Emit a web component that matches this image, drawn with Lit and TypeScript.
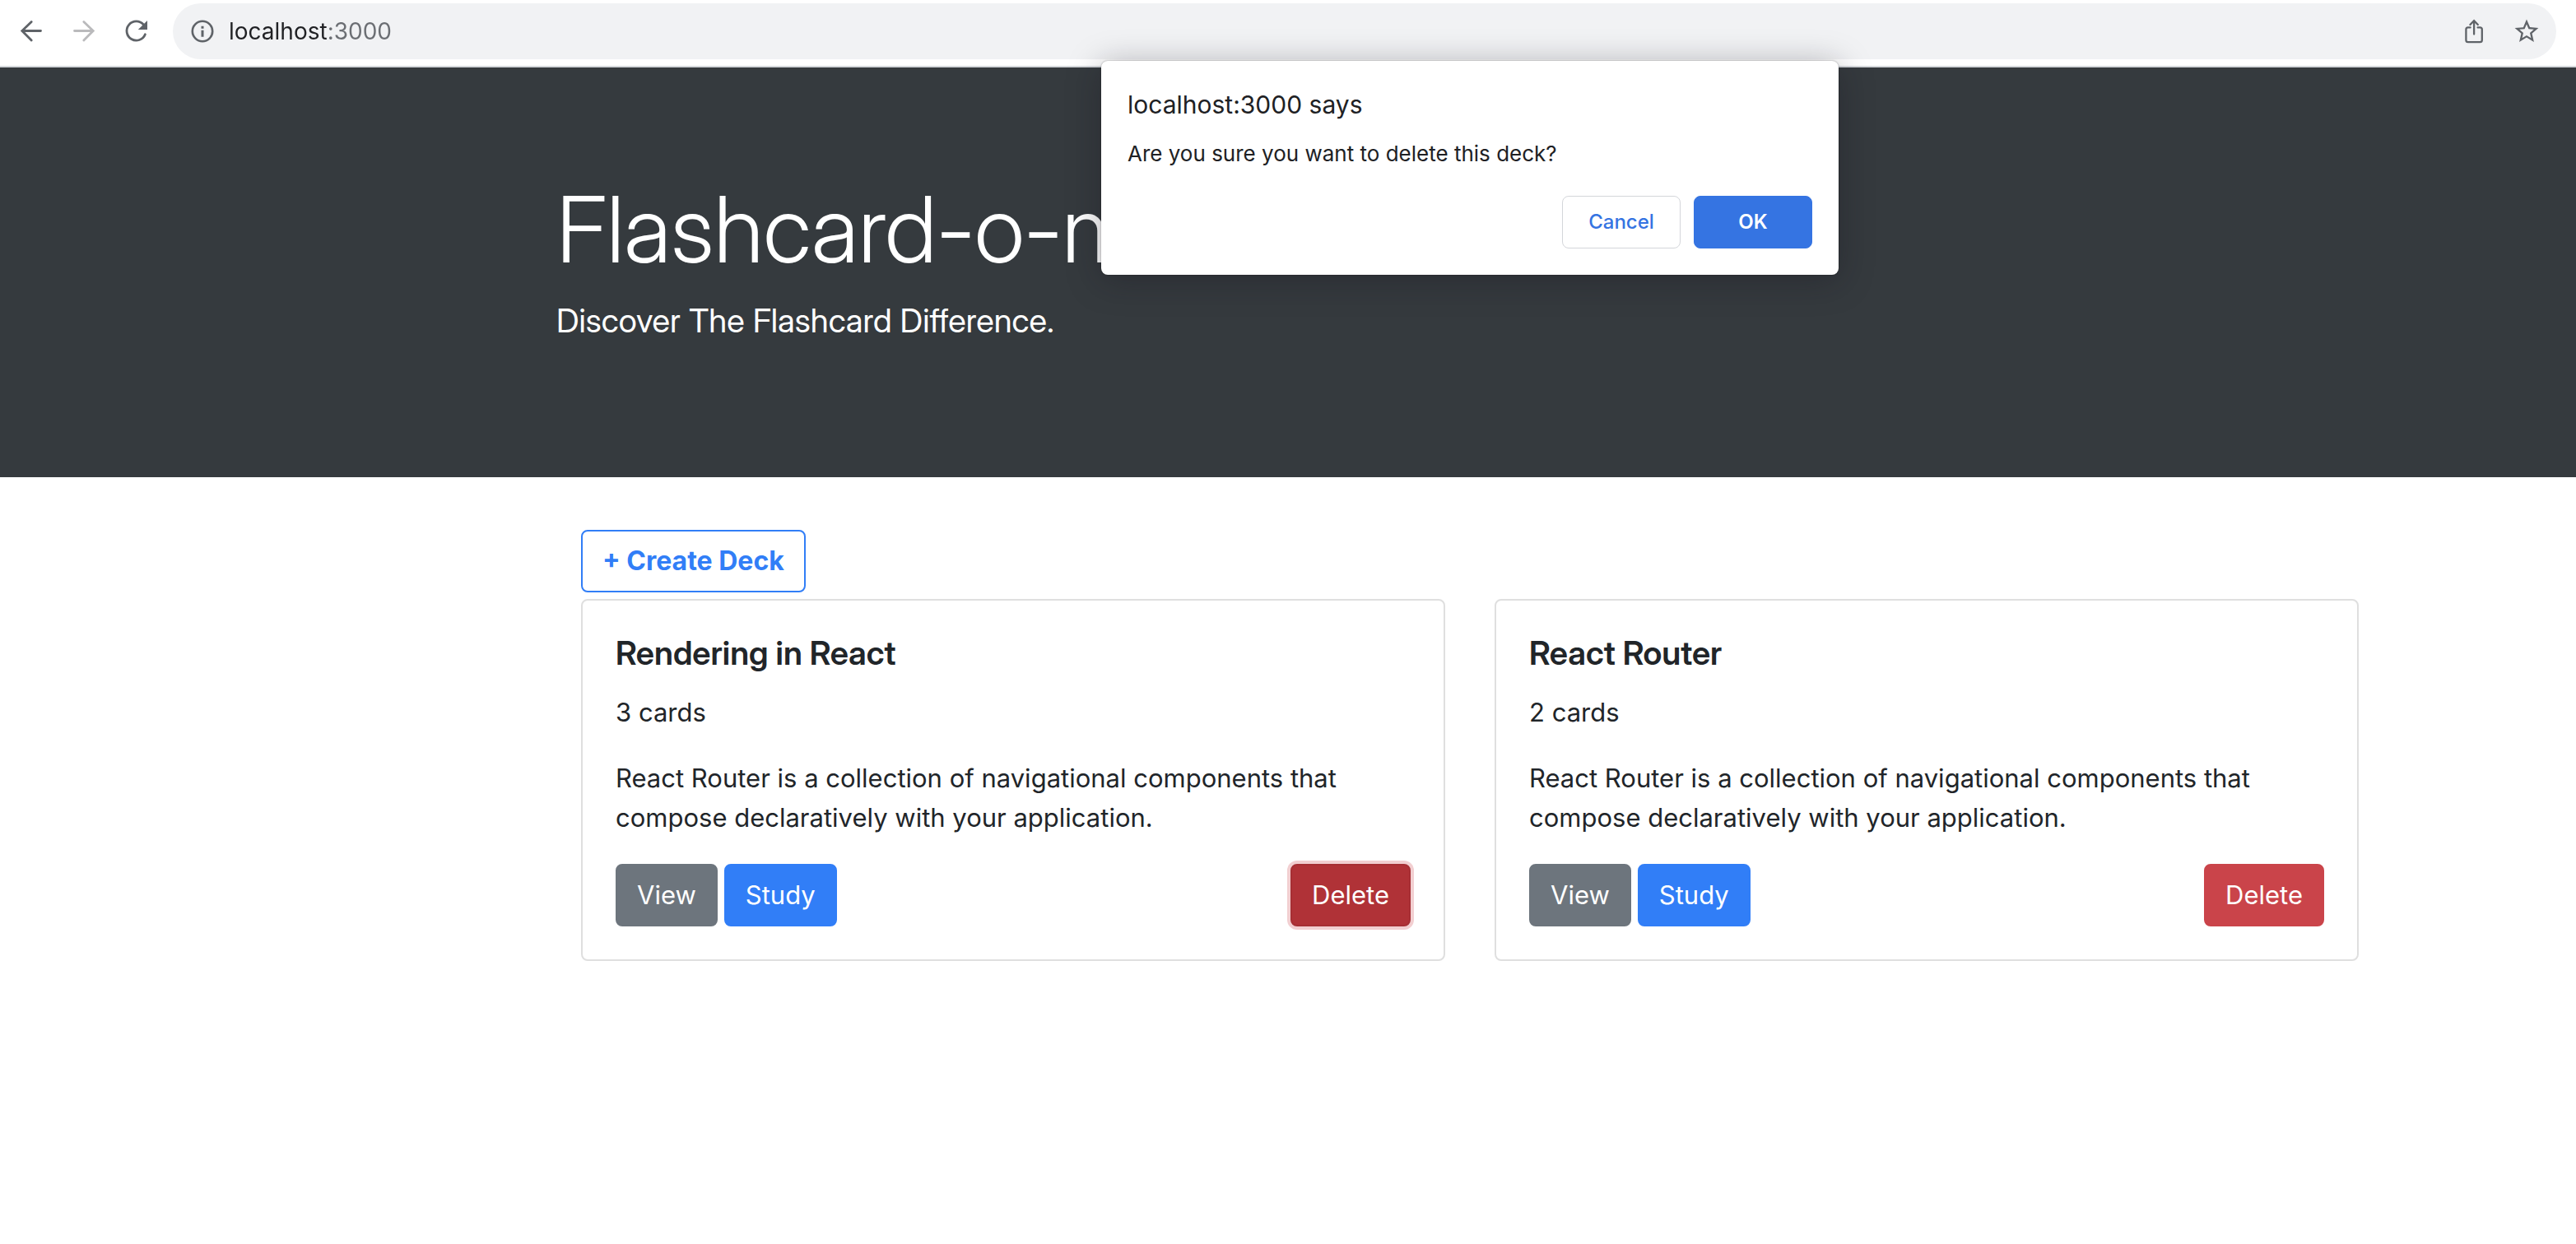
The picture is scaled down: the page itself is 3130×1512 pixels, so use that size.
import { LitElement, html, css, svg } from "lit";
import { customElement, property, state } from "lit/decorators.js";
import { classMap } from "lit/directives/class-map.js";

interface Deck {
  id: number;
  name: string;
  cards: number;
  description: string;
}

const DECKS: Deck[] = [
  {
    id: 1,
    name: "Rendering in React",
    cards: 3,
    description:
      "React Router is a collection of navigational components that compose declaratively with your application.",
  },
  {
    id: 2,
    name: "React Router",
    cards: 2,
    description:
      "React Router is a collection of navigational components that compose declaratively with your application.",
  },
];

const icon = (content: unknown) => html`
  <svg class="icon" viewBox="0 0 32 32" width="32" height="32" fill="none" stroke="currentColor" stroke-width="2.8" aria-hidden="true">
    ${content}
  </svg>
`;

const backIcon = icon(svg`<path d="M27.500 15.500H5M16.200 4.400L4.800 15.500l11.400 11.500" stroke-linecap="round"/>`);
const forwardIcon = icon(svg`<path d="M4.500 15.500H27M15.800 4.400L27.200 15.500 15.800 27" stroke-linecap="round"/>`);
const reloadIcon = icon(svg`
  <path d="M24.400 8A11.600 11.600 0 1 0 26.400 19.800" stroke-linecap="round"/>
  <path d="M29 3v11H17.800z" fill="currentColor" stroke="none"/>`);
const infoIcon = icon(svg`
  <circle cx="16" cy="16" r="12.200" stroke-width="2.600"/>
  <path d="M14.500 9.700h3v3h-3zM14.500 14.700h3v8h-3z" fill="currentColor" stroke="none"/>`);
const shareIcon = icon(svg`
  <path d="M11.600 11.400H8.800a2.400 2.400 0 0 0-2.400 2.400v13a2.400 2.400 0 0 0 2.400 2.400h14.600a2.400 2.400 0 0 0 2.400-2.400v-13a2.400 2.400 0 0 0-2.400-2.400h-2.800M16.100 19.600V4M11.400 8L16.100 3.200 20.800 8" stroke-width="2.300" stroke-linecap="round"/>`);
const starIcon = icon(svg`
  <path transform="translate(-1.300 -1.300) scale(1.440)" fill="currentColor" stroke="none"
    d="M22 9.240l-7.190-.62L12 2 9.190 8.630 2 9.240l5.460 4.730L5.820 21 12 17.270 18.180 21l-1.630-7.030L22 9.240zM12 15.400l-3.760 2.270 1-4.280-3.320-2.880 4.380-.38L12 6.100l1.710 4.040 4.380.38-3.320 2.880 1 4.280L12 15.400z"/>`);

@customElement("browser-bar")
export class BrowserBar extends LitElement {
  static styles = css`
    :host {
      display: block;
      color: #5f6368;
      border-bottom: 2px solid #d5d8dc;
    }
    .bar {
      display: flex;
      align-items: center;
      gap: 32px;
      padding: 4px 24px 8px 22px;
    }
    .icon {
      display: block;
    }
    .tool {
      padding: 0;
      border: 0;
      background: none;
      color: inherit;
      cursor: pointer;
    }
    .tool:disabled {
      color: #bababc;
      cursor: default;
    }
    .address {
      flex: 1;
      display: flex;
      align-items: center;
      gap: 16px;
      height: 68px;
      margin-left: -4px;
      padding: 0 20px;
      border-radius: 34px;
      background: #f1f2f4;
      box-sizing: border-box;
    }
    .url {
      flex: 1;
      min-width: 0;
      padding: 0;
      border: 0;
      outline: 0;
      font: 28px/40px Inter, "Liberation Sans", sans-serif;
      color: #202124;
      /* The host is darker than the port. */
      background: linear-gradient(to right, #202124 120px, #6b6e73 120px);
      -webkit-background-clip: text;
      background-clip: text;
      -webkit-text-fill-color: transparent;
    }
    .actions {
      display: flex;
      gap: 32px;
    }
  `;

  render() {
    return html`
      <nav class="bar" aria-label="Browser">
        <button class="tool" aria-label="Back">${backIcon}</button>
        <button class="tool" aria-label="Forward" disabled>${forwardIcon}</button>
        <button class="tool" aria-label="Reload">${reloadIcon}</button>
        <div class="address">
          <button class="tool" aria-label="Site information">${infoIcon}</button>
          <input class="url" type="text" aria-label="Address" value="localhost:3000" />
          <div class="actions">
            <button class="tool" aria-label="Share">${shareIcon}</button>
            <button class="tool" aria-label="Bookmark">${starIcon}</button>
          </div>
        </div>
      </nav>
    `;
  }
}

const buttonStyles = css`
  .btn {
    display: inline-block;
    box-sizing: border-box;
    padding: 12px 24px;
    border: 2px solid transparent;
    border-radius: 8px;
    font: 400 31px/48px Inter, "Liberation Sans", sans-serif;
    text-align: center;
    text-decoration: none;
    color: #fff;
    cursor: pointer;
  }
  .secondary {
    background: #6d757d;
    border-color: #6d757d;
  }
  .primary {
    background: #317ef7;
    border-color: #317ef7;
  }
  .danger {
    background: #ca444a;
    border-color: #ca444a;
  }
  .danger.pressed {
    background: #b03237;
    border-color: #a62f34;
    box-shadow: 0 0 0 4px #f2cfd1;
  }
  .outline {
    border-color: #317ef7;
    background: #fff;
    color: #317ef7;
    font-size: 32px;
    font-weight: 700;
  }
`;

@customElement("deck-card")
export class DeckCard extends LitElement {
  @property({ attribute: false }) deck!: Deck;
  @property({ type: Boolean }) deleting = false;

  static styles = [
    buttonStyles,
    css`
      :host {
        display: block;
      }
      .card {
        padding: 40px;
        border: 2px solid #dfdfdf;
        border-radius: 8px;
      }
      .title {
        margin: 0 0 24px;
        font-family: "Inter Display", Inter, "Liberation Sans", sans-serif;
        font-size: 40px;
        font-weight: 600;
        line-height: 48px;
      }
      .text {
        margin: 0 0 32px;
      }
      .buttons {
        display: flex;
        gap: 8px;
      }
      .danger {
        margin-left: auto;
      }
    `,
  ];

  private requestDelete() {
    this.dispatchEvent(new CustomEvent("deck-delete", { detail: this.deck.id, bubbles: true, composed: true }));
  }

  render() {
    const { id, name, cards, description } = this.deck;
    return html`
      <article class="card">
        <h5 class="title">${name}</h5>
        <p class="text">${cards} cards</p>
        <p class="text">${description}</p>
        <div class="buttons">
          <a class="btn secondary" href="#/decks/${id}">View</a>
          <a class="btn primary" href="#/decks/${id}/study">Study</a>
          <button class=${classMap({ btn: true, danger: true, pressed: this.deleting })} @click=${this.requestDelete}>
            Delete
          </button>
        </div>
      </article>
    `;
  }
}

@customElement("confirm-dialog")
export class ConfirmDialog extends LitElement {
  static styles = css`
    :host {
      display: block;
      box-sizing: border-box;
      padding: 32px;
      border-radius: 8px;
      background: #fff;
      color: #202124;
      box-shadow: 0 0 2px rgba(0, 0, 0, 0.4), 0 6px 40px rgba(20, 16, 28, 0.35);
    }
    .title {
      margin: 0 0 18px;
      font-size: 30px;
      font-weight: 400;
      line-height: 43px;
    }
    .message {
      margin: 0 0 31px;
      font-size: 26px;
      line-height: 40px;
    }
    .buttons {
      display: flex;
      justify-content: flex-end;
      gap: 16px;
    }
    .choice {
      width: 144px;
      height: 64px;
      padding: 0;
      border: 1px solid #d4d6da;
      border-radius: 8px;
      background: #fff;
      font: 500 24px/32px Inter, "Liberation Sans", sans-serif;
      color: #3574e2;
      cursor: pointer;
    }
    .ok {
      border-color: #3574e2;
      background: #3574e2;
      color: #fff;
      font-weight: 600;
    }
  `;

  private answer(accepted: boolean) {
    this.dispatchEvent(new CustomEvent("answer", { detail: accepted }));
  }

  render() {
    return html`
      <h2 class="title">localhost:3000 says</h2>
      <p class="message">Are you sure you want to delete this deck?</p>
      <div class="buttons">
        <button class="choice" @click=${() => this.answer(false)}>Cancel</button>
        <button class="choice ok" @click=${() => this.answer(true)}>OK</button>
      </div>
    `;
  }
}

@customElement("app-root")
export class AppRoot extends LitElement {
  @state() private decks = DECKS;
  @state() private pendingId: number | null = 1;

  static styles = [
    buttonStyles,
    css`
      :host {
        display: block;
        position: relative;
        min-height: 100vh;
        overflow: hidden;
        background: #fff;
        color: #212529;
        font: 400 31px/48px Inter, "Liberation Sans", sans-serif;
      }
      .jumbotron {
        padding: 128px 234px 128px 676px;
        background: #353a3e;
        color: #fff;
        font-family: "Inter Display", Inter, "Liberation Sans", sans-serif;
      }
      .headline {
        margin: 0 0 14px;
        font-size: 112px;
        font-weight: 300;
        line-height: 136px;
      }
      .lead {
        margin: 0 0 32px;
        font-size: 40px;
        font-weight: 400;
        line-height: 60px;
      }
      .main {
        padding: 64px 264px 64px 706px;
      }
      .create {
        margin-bottom: 8px;
      }
      .decks {
        display: grid;
        grid-template-columns: repeat(2, 1fr);
        gap: 60px;
      }
      .dialog {
        position: absolute;
        top: 74px;
        left: 1338px;
        width: 896px;
      }
    `,
  ];

  private onAnswer(event: CustomEvent<boolean>) {
    if (event.detail) {
      this.decks = this.decks.filter((deck) => deck.id !== this.pendingId);
    }
    this.pendingId = null;
  }

  render() {
    return html`
      <browser-bar></browser-bar>
      <header class="jumbotron">
        <h1 class="headline">Flashcard-o-matic</h1>
        <p class="lead">Discover The Flashcard Difference.</p>
      </header>
      <main class="main">
        <a class="btn outline create" href="#/decks/new">+ Create Deck</a>
        <section class="decks" @deck-delete=${(e: CustomEvent<number>) => (this.pendingId = e.detail)}>
          ${this.decks.map(
            (deck) => html`<deck-card .deck=${deck} ?deleting=${deck.id === this.pendingId}></deck-card>`
          )}
        </section>
      </main>
      ${this.pendingId === null
        ? null
        : html`<confirm-dialog class="dialog" role="alertdialog" aria-label="localhost:3000 says" @answer=${this.onAnswer}></confirm-dialog>`}
    `;
  }
}
